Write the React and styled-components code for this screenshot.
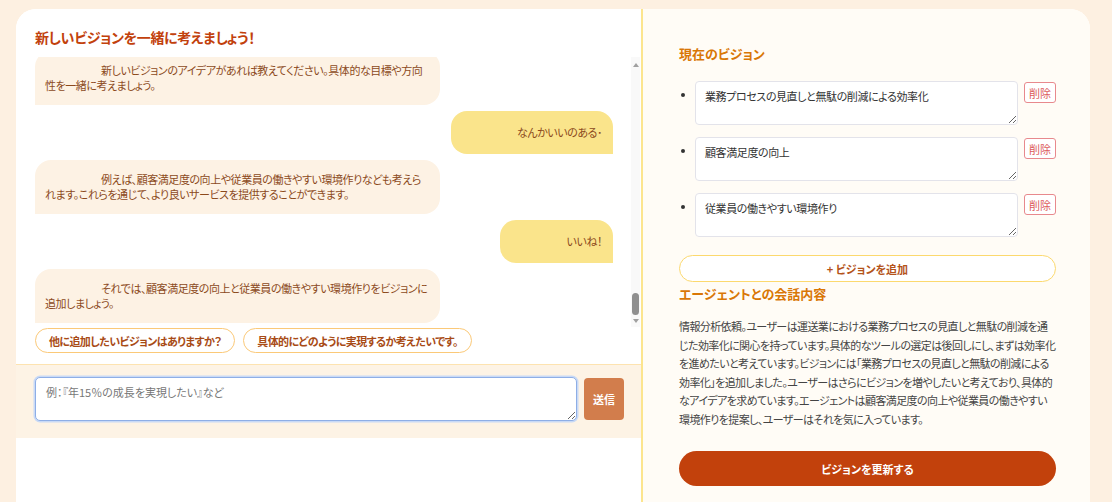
import React, { useLayoutEffect, useRef } from 'react';
import styled, { createGlobalStyle } from 'styled-components';

const messages = [
  { from: 'bot', text: 'こんにちは！ビジョン作成のお手伝いをします。まずはあなたの会社の業種や、現在取り組んでいることを教えてください。' },
  { from: 'user', text: '運送業をやっています。' },
  { from: 'bot', text: '運送業ですね。現在、業務の中で課題に感じていることや、改善したいことはありますか？' },
  { from: 'user', text: '業務プロセスの見直しと無駄の削減をしたい' },
  { from: 'bot', text: '業務プロセスの見直しと無駄の削減ですね。効率化のために、具体的なツールの導入なども検討されていますか？' },
  { from: 'user', text: 'ツールはまだいいかな' },
  { from: 'bot', text: '承知しました。ツールの選定は後回しにして、まずは効率化を進めることを目標にしましょう。' },
  { from: 'user', text: 'お願いします' },
  { from: 'bot', text: 'それでは「業務プロセスの見直しと無駄の削減による効率化」をビジョンに追加しました。' },
  { from: 'user', text: 'もっと増やしたい' },
  { from: 'bot', text: '新しいビジョンのアイデアがあれば教えてください。具体的な目標や方向性を一緒に考えましょう。' },
  { from: 'user', text: 'なんかいいのある･' },
  { from: 'bot', text: '例えば、顧客満足度の向上や従業員の働きやすい環境作りなども考えられます。これらを通じて、より良いサービスを提供することができます。' },
  { from: 'user', text: 'いいね！' },
  { from: 'bot', text: 'それでは、顧客満足度の向上と従業員の働きやすい環境作りをビジョンに追加しましょう。' },
];

const suggestions = [
  '他に追加したいビジョンはありますか？',
  '具体的にどのように実現するか考えたいです。',
];

const visions = [
  '業務プロセスの見直しと無駄の削減による効率化',
  '顧客満足度の向上',
  '従業員の働きやすい環境作り',
];

const summary =
  '情報分析依頼。ユーザーは運送業における業務プロセスの見直しと無駄の削減を通じた効率化に関心を持っています。具体的なツールの選定は後回しにし、まずは効率化を進めたいと考えています。ビジョンには「業務プロセスの見直しと無駄の削減による効率化」を追加しました。ユーザーはさらにビジョンを増やしたいと考えており、具体的なアイデアを求めています。エージェントは顧客満足度の向上や従業員の働きやすい環境作りを提案し、ユーザーはそれを気に入っています。';

export default function App() {
  const listRef = useRef(null);

  useLayoutEffect(() => {
    const el = listRef.current;
    if (el) el.scrollTop = el.scrollHeight;
  }, []);

  return (
    <Page>
      <GlobalStyle />
      <Card>
        <ChatPanel>
          <ChatTitle>新しいビジョンを一緒に考えましょう！</ChatTitle>
          <MessageArea>
            <MessageList ref={listRef}>
              {messages.map((m, i) => (
                <Row key={i} $mine={m.from === 'user'}>
                  <Bubble $mine={m.from === 'user'}>{m.text}</Bubble>
                </Row>
              ))}
            </MessageList>
            <ScrollRail>
              <RailArrow />
              <RailTrack>
                <RailThumb />
              </RailTrack>
              <RailArrow $down />
            </ScrollRail>
          </MessageArea>
          <Suggestions>
            {suggestions.map((s) => (
              <Chip key={s}>{s}</Chip>
            ))}
          </Suggestions>
          <Composer>
            <ChatInput autoFocus placeholder="例：『年15％の成長を実現したい』など" />
            <SendButton>送信</SendButton>
          </Composer>
        </ChatPanel>

        <VisionPanel>
          <SectionTitle>現在のビジョン</SectionTitle>
          <VisionList>
            {visions.map((v) => (
              <VisionItem key={v}>
                <Bullet />
                <VisionInput defaultValue={v} />
                <DeleteButton>削除</DeleteButton>
              </VisionItem>
            ))}
          </VisionList>
          <AddButton>+ ビジョンを追加</AddButton>
          <SectionTitle $tight>エージェントとの会話内容</SectionTitle>
          <Summary>{summary}</Summary>
          <UpdateButton>ビジョンを更新する</UpdateButton>
        </VisionPanel>
      </Card>
    </Page>
  );
}

const GlobalStyle = createGlobalStyle`
  * { box-sizing: border-box; }
  html, body {
    margin: 0;
    padding: 0;
    overflow: hidden;
    background: #fdf0e1;
  }
  body {
    font-family: "Noto Sans CJK JP", "Noto Sans", sans-serif;
    font-feature-settings: "palt";
  }
  button, textarea {
    font-family: inherit;
    font-feature-settings: inherit;
  }
`;

const Page = styled.div`
  height: 502px;
  padding: 9px 22px 0 16px;
`;

const Card = styled.div`
  display: flex;
  height: 100%;
  border-radius: 20px 20px 0 0;
  overflow: hidden;
  background: #fff;
`;

const ChatPanel = styled.section`
  width: 627px;
  flex-shrink: 0;
  display: flex;
  flex-direction: column;
  background: #fff;
  border-right: 2px solid #fce58e;
`;

const ChatTitle = styled.h2`
  margin: 18px 19px 10px;
  font-size: 14px;
  line-height: 20px;
  font-weight: 700;
  letter-spacing: -0.3px;
  color: #c2410c;
`;

const MessageArea = styled.div`
  display: flex;
  height: 270px;
`;

const MessageList = styled.div`
  flex: 1;
  overflow-y: auto;
  scrollbar-width: none;
  display: flex;
  flex-direction: column;
  gap: 6px;
  padding: 0 18px 4px 19px;
`;

const ScrollRail = styled.div`
  width: 9px;
  margin-right: 1px;
  flex-shrink: 0;
  display: flex;
  flex-direction: column;
  align-items: center;
  padding: 6px 0 4px;
  background: #f9f9f9;
`;

const RailArrow = styled.span`
  width: 0;
  height: 0;
  border-left: 3.5px solid transparent;
  border-right: 3.5px solid transparent;
  ${(p) => (p.$down ? 'border-top: 4px solid #a0a0a0;' : 'border-bottom: 4px solid #a0a0a0;')}
`;

const RailTrack = styled.div`
  flex: 1;
  width: 100%;
  display: flex;
  flex-direction: column;
  justify-content: flex-end;
  align-items: center;
  padding: 4px 0 4px;
`;

const RailThumb = styled.div`
  width: 7px;
  height: 22px;
  border-radius: 4px;
  background: #8f8f8f;
`;

const Row = styled.div`
  display: flex;
  justify-content: ${(p) => (p.$mine ? 'flex-end' : 'flex-start')};
`;

const Bubble = styled.div`
  max-width: 70%;
  padding: ${(p) => (p.$mine ? '14px 11px 14px 10px' : '12px 10px')};
  text-indent: 56px;
  text-align: ${(p) => (p.$mine ? 'right' : 'left')};
  font-size: 11px;
  line-height: 15px;
  letter-spacing: -0.45px;
  color: #8c4a1c;
  background: ${(p) => (p.$mine ? '#fae48b' : '#fdf2e4')};
  border-radius: ${(p) => (p.$mine ? '16px 16px 0 16px' : '16px 16px 16px 0')};
`;

const Suggestions = styled.div`
  display: flex;
  gap: 8px;
  padding: 1px 19px 11px;
`;

const Chip = styled.button`
  height: 25px;
  padding: 0 13px;
  border: 1.5px solid #fbc978;
  border-radius: 999px;
  background: #fff;
  color: #a84b16;
  font-size: 11px;
  font-weight: 700;
  letter-spacing: -0.6px;
  cursor: pointer;
`;

const Composer = styled.div`
  display: flex;
  align-items: center;
  gap: 7px;
  padding: 12px 17px 17px 19px;
  background: #fdf3e5;
  border-top: 1px solid #fde3b0;
`;

const ChatInput = styled.textarea`
  flex: 1;
  height: 44px;
  padding: 6px 10px;
  border: 1px solid #8eaee6;
  border-radius: 5px;
  box-shadow: 0 0 0 1.5px #c9daf6;
  outline: none;
  font-size: 11px;
  line-height: 16px;
  color: #333;
  background: #fff;

  &::placeholder {
    color: #777;
  }
`;

const SendButton = styled.button`
  width: 40px;
  height: 42px;
  border: none;
  border-radius: 4px;
  background: #d27d4c;
  color: #fff;
  font-size: 11px;
  font-weight: 700;
  cursor: pointer;
`;

const VisionPanel = styled.section`
  flex: 1;
  display: flex;
  flex-direction: column;
  padding: 36px 34px 0 36px;
  background: #fffcf6;
`;

const SectionTitle = styled.h3`
  margin: ${(p) => (p.$tight ? '3px 0 14px' : '0 0 18px')};
  font-size: 13px;
  line-height: 18px;
  font-weight: 700;
  color: #d97706;
`;

const VisionList = styled.ul`
  display: flex;
  flex-direction: column;
  gap: 12px;
  margin: 0;
  padding: 0;
  list-style: none;
`;

const VisionItem = styled.li`
  display: flex;
  align-items: flex-start;
`;

const Bullet = styled.span`
  position: relative;
  width: 16px;
  flex-shrink: 0;
  height: 44px;

  &::before {
    content: '';
    position: absolute;
    left: 2px;
    top: 12px;
    width: 4px;
    height: 4px;
    border-radius: 50%;
    background: #333;
  }
`;

const VisionInput = styled.textarea`
  flex: 1;
  height: 44px;
  padding: 6px 9px;
  border: 1px solid #e3e3ea;
  border-radius: 4px;
  background: #fff;
  font-size: 11px;
  line-height: 16px;
  letter-spacing: -0.4px;
  color: #333;
  outline: none;
`;

const DeleteButton = styled.button`
  width: 32px;
  height: 21px;
  margin: 1px 0 0 6px;
  padding: 0;
  border: 1px solid #e8898d;
  border-radius: 3px;
  background: #fff;
  color: #dc5a5a;
  font-size: 11px;
  cursor: pointer;
`;

const AddButton = styled.button`
  height: 27px;
  margin-top: 18px;
  border: 1.5px solid #fcd96e;
  border-radius: 999px;
  background: #fff;
  color: #b4531a;
  font-size: 11px;
  font-weight: 700;
  cursor: pointer;
`;

const Summary = styled.p`
  margin: 0;
  font-size: 11px;
  line-height: 18.5px;
  letter-spacing: -0.6px;
  color: #444;
`;

const UpdateButton = styled.button`
  height: 35px;
  margin-top: 23px;
  border: none;
  border-radius: 999px;
  background: #c2410c;
  color: #fff;
  font-size: 11px;
  font-weight: 700;
  cursor: pointer;
`;
